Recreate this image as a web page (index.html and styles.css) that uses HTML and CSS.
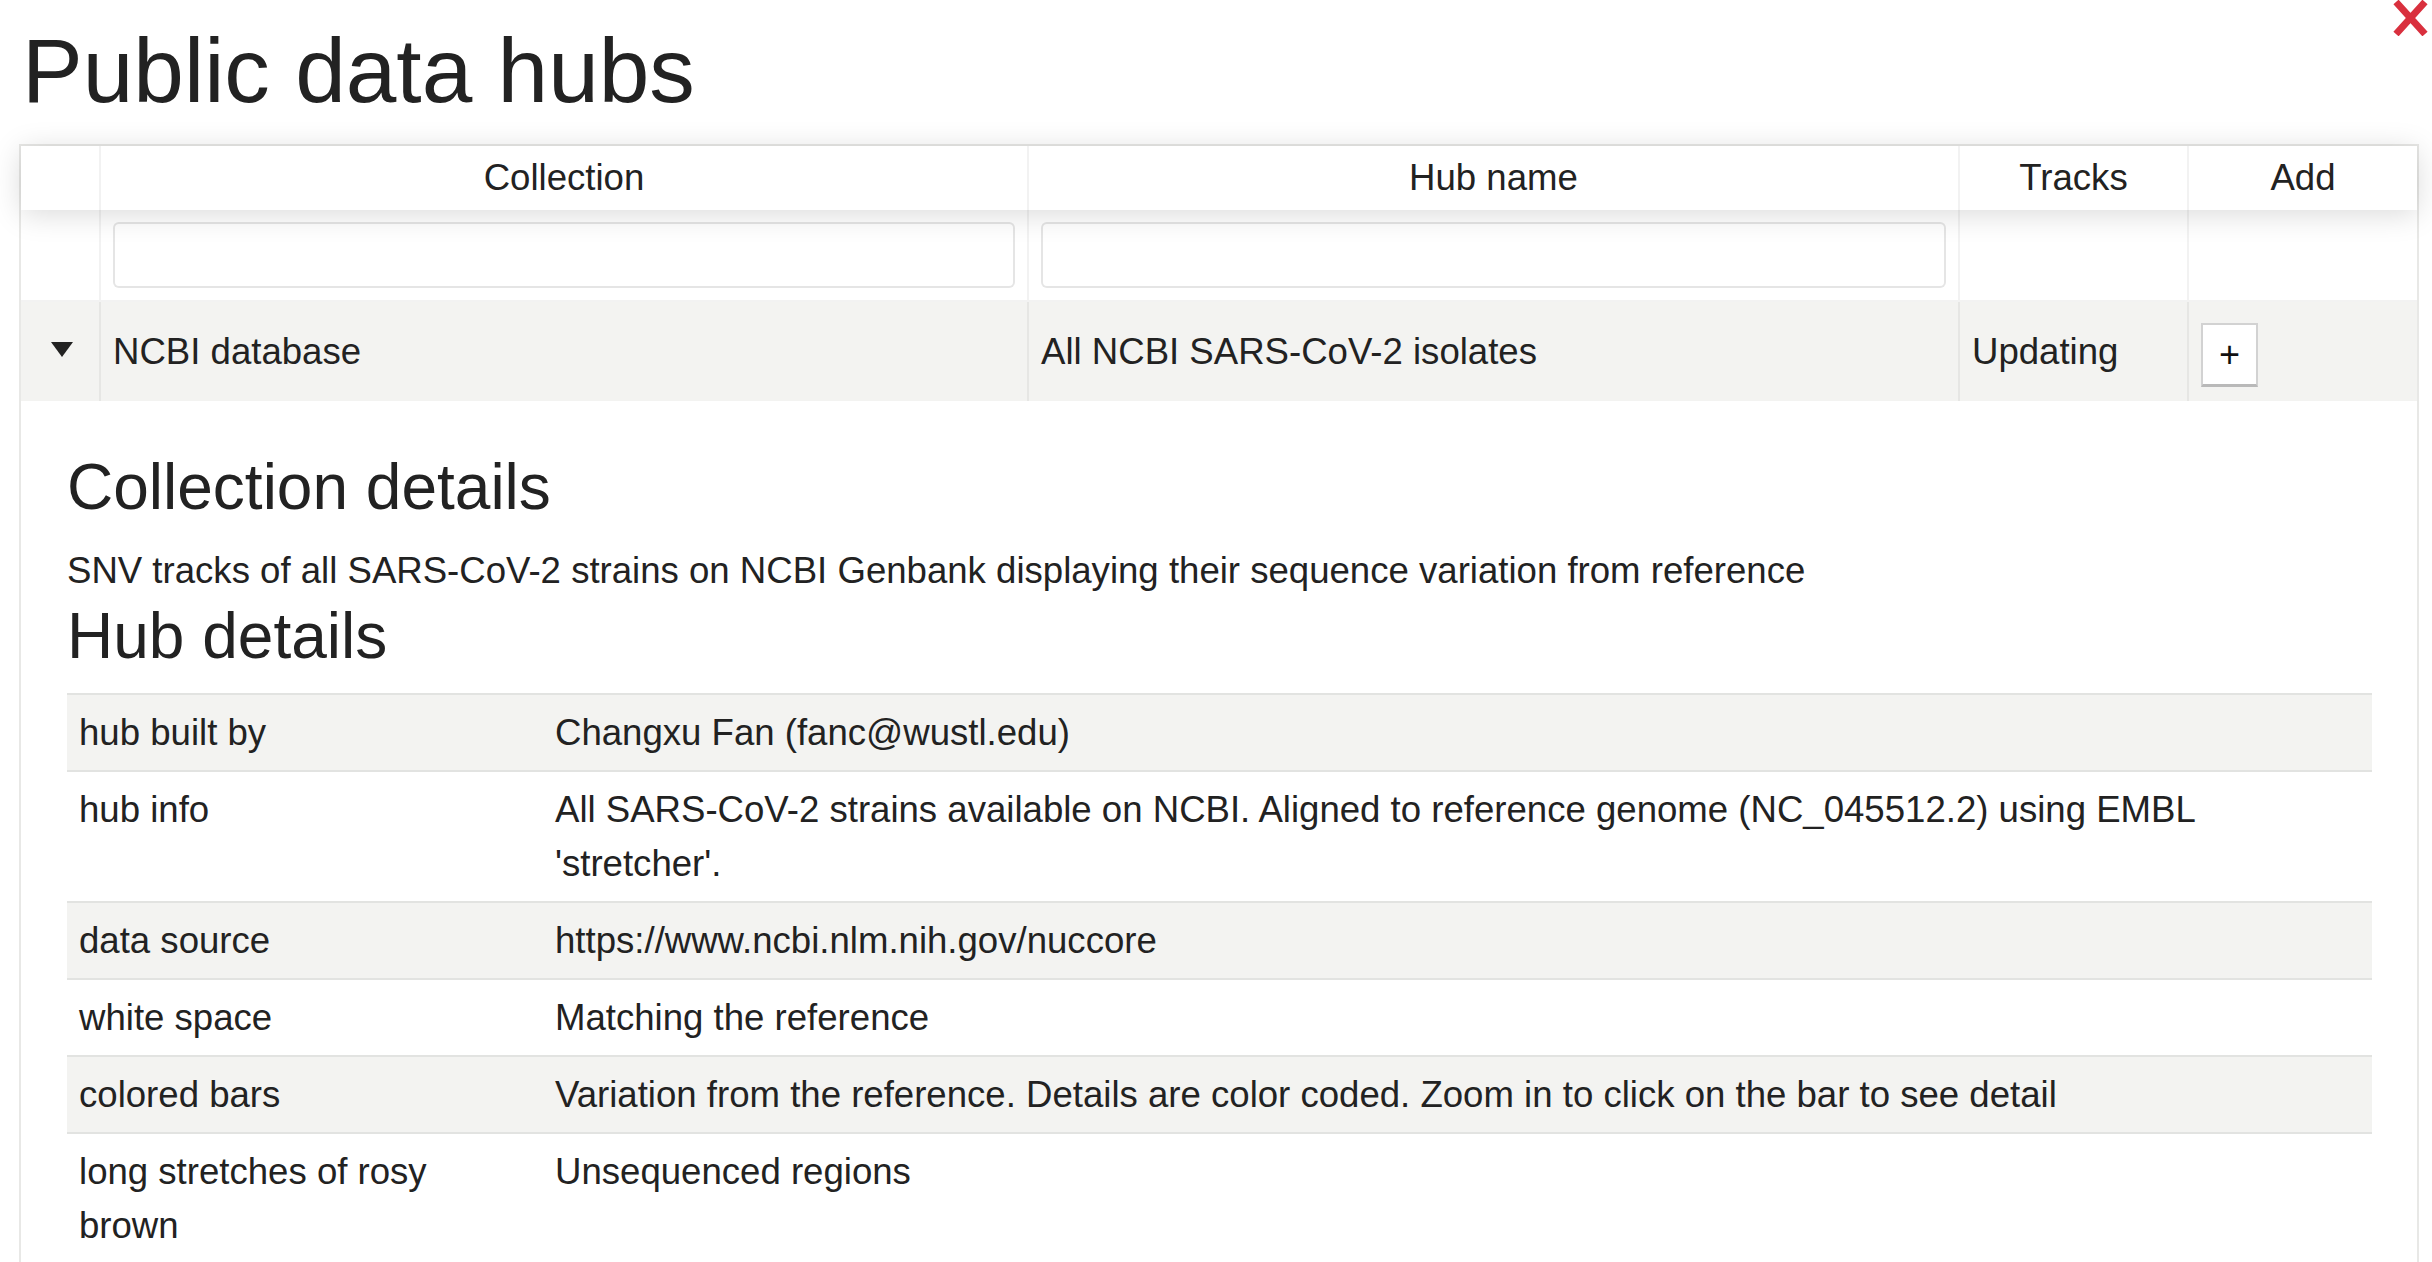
FILE: index.html
```html
<!DOCTYPE html>
<html lang="en">
<head>
<meta charset="utf-8">
<title>Public data hubs</title>
<link rel="stylesheet" href="styles.css">
</head>
<body>
<div class="modal">
  <button class="close" aria-label="Close">
    <svg viewBox="0 0 37 36" width="37" height="36"><path d="M4 2 L33 34 M33 2 L4 34" stroke="#d9303e" stroke-width="7" fill="none"/></svg>
  </button>
  <h1 class="title">Public data hubs</h1>
  <div class="rt">
    <div class="tr thead">
      <div class="th"></div>
      <div class="th">Collection</div>
      <div class="th">Hub name</div>
      <div class="th">Tracks</div>
      <div class="th last">Add</div>
    </div>
    <div class="tr filters">
      <div class="fc"></div>
      <div class="fc"><input class="filter" type="text"></div>
      <div class="fc"><input class="filter" type="text"></div>
      <div class="fc"></div>
      <div class="fc last"></div>
    </div>
    <div class="tr row odd">
      <div class="td expander"><span class="tri"></span></div>
      <div class="td">NCBI database</div>
      <div class="td">All NCBI SARS-CoV-2 isolates</div>
      <div class="td">Updating</div>
      <div class="td last add-cell"><button class="add">+</button></div>
    </div>
    <div class="sub">
      <h2>Collection details</h2>
      <p>SNV tracks of all SARS-CoV-2 strains on NCBI Genbank displaying their sequence variation from reference</p>
      <h2>Hub details</h2>
      <table class="details">
        <colgroup><col class="c1"><col></colgroup>
        <tbody>
          <tr class="s"><td>hub built by</td><td>Changxu Fan (fanc@wustl.edu)</td></tr>
          <tr><td>hub info</td><td>All SARS-CoV-2 strains available on NCBI. Aligned to reference genome (NC_045512.2) using EMBL 'stretcher'.</td></tr>
          <tr class="s"><td>data source</td><td>https://www.ncbi.nlm.nih.gov/nuccore</td></tr>
          <tr><td>white space</td><td>Matching the reference</td></tr>
          <tr class="s"><td>colored bars</td><td>Variation from the reference. Details are color coded. Zoom in to click on the bar to see detail</td></tr>
          <tr><td>long stretches of rosy brown</td><td>Unsequenced regions</td></tr>
        </tbody>
      </table>
    </div>
  </div>
</div>
</body>
</html>
```
FILE: styles.css
```css
* { box-sizing: border-box; }
html, body { margin: 0; padding: 0; background: #fff; }
body {
  font-family: "Liberation Sans", Arial, Helvetica, sans-serif;
  color: #212529;
  font-size: 36.6px;
  line-height: 54px;
}
.modal {
  position: relative;
  height: 1262px;
  overflow: hidden;
  padding: 16px 0 0 19px;
}
.close {
  position: absolute;
  top: 0;
  right: 3px;
  width: 37px;
  height: 36px;
  padding: 0;
  border: 0;
  background: transparent;
}
.close svg { display: block; }
.title {
  font-size: 91px;
  font-weight: 400;
  line-height: 1.2;
  margin: 0 0 19px 3px;
  color: #222;
}
.rt {
  width: 2400px;
  border: 2px solid #e8e8e6;
  border-bottom: 0;
  min-height: 1200px;
}
.tr {
  display: grid;
  grid-template-columns: 80px 928px 931px 229px 228px;
}
.thead {
  position: relative;
  z-index: 1;
  height: 64px;
  box-shadow: 0 4px 30px 0 rgba(0,0,0,0.15);
  background: #fff;
}
.th {
  display: flex;
  align-items: center;
  justify-content: center;
  border-right: 2px solid rgba(0,0,0,0.05);
  color: #222;
}
.th.last, .fc.last, .td.last { border-right: 0; }
.filters {
  height: 92px;
  border-bottom: 2px solid rgba(0,0,0,0.05);
}
.fc {
  border-right: 2px solid rgba(0,0,0,0.05);
  padding: 12px 12px 0;
}
.filter {
  display: block;
  width: 100%;
  height: 66px;
  border: 2px solid rgba(0,0,0,0.1);
  border-radius: 6px;
  background: #fff;
  font: inherit;
  outline: none;
}
.row {
  height: 99px;
  align-items: center;
}
.odd { background: #f3f3f1; }
.td {
  height: 100%;
  display: flex;
  align-items: center;
  padding: 0 12px;
  border-right: 2px solid rgba(0,0,0,0.05);
  color: #222;
}
.expander { justify-content: center; padding: 0; }
.tri {
  width: 0;
  height: 0;
  border-left: 11px solid transparent;
  border-right: 11px solid transparent;
  border-top: 15px solid #222;
  margin-left: 4px;
  margin-top: -4px;
}
.add-cell { align-items: flex-start; padding-top: 21px; }
.add {
  width: 57px;
  height: 64px;
  padding: 0;
  background: #fff;
  border: 2px solid #d2d2d2;
  border-bottom: 3px solid #b9b9b9;
  font-family: "Liberation Sans", Arial, sans-serif;
  font-size: 36px;
  line-height: 1;
  color: #111;
}
.sub {
  padding: 48px 45px 0 46px;
}
.sub h2 {
  font-size: 64px;
  font-weight: 500;
  line-height: 1.2;
  margin: 0 0 18px;
  color: #222;
}
.sub p { margin: 0; color: #222; }
.details {
  width: 100%;
  border-collapse: collapse;
  table-layout: fixed;
}
.details .c1 { width: 476px; }
.details td {
  padding: 11px 30px 10px 12px;
  border-top: 2px solid #e2e3e1;
  vertical-align: top;
  color: #222;
}
.details td:first-child { padding-right: 22px; }
.details tr.s td { background: #f3f3f1; }
```
